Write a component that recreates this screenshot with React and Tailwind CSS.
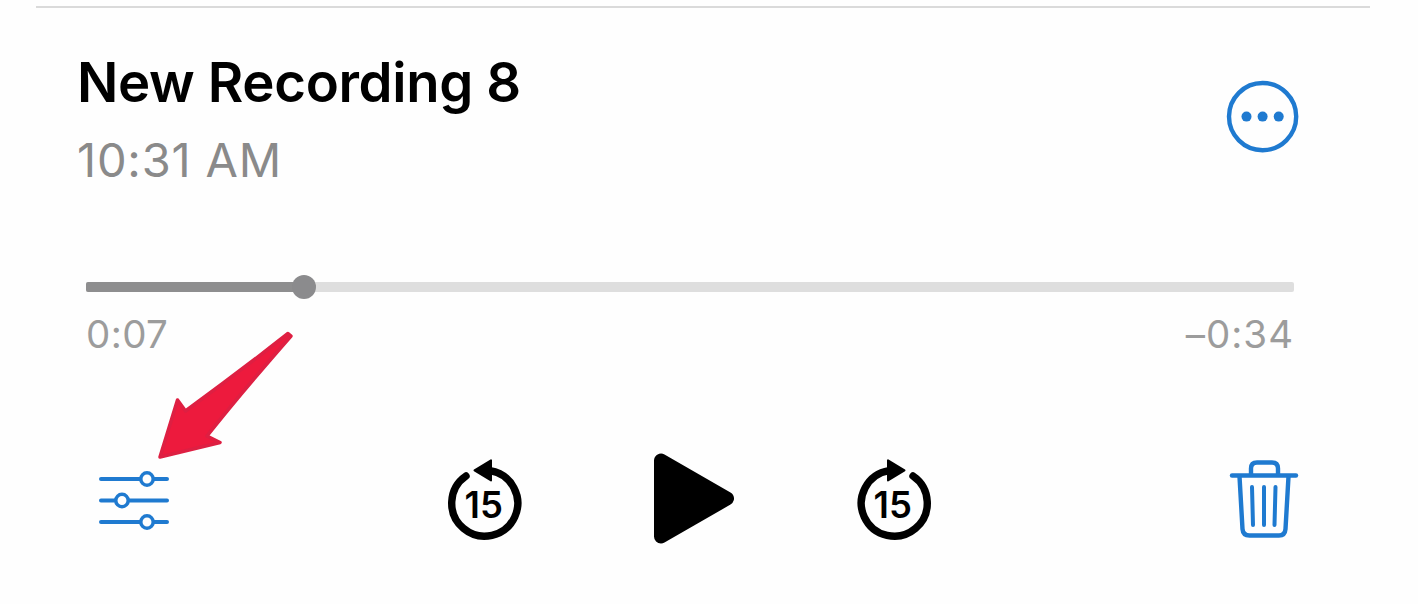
import React from 'react';

function MoreIcon() {
  return (
    <svg width="76" height="76" viewBox="0 0 76 76" fill="none">
      <circle cx="37.6" cy="37.6" r="33.6" stroke="currentColor" strokeWidth="4.4" />
      <circle cx="21.5" cy="37.6" r="5" fill="currentColor" />
      <circle cx="37.6" cy="37.6" r="5" fill="currentColor" />
      <circle cx="53.7" cy="37.6" r="5" fill="currentColor" />
    </svg>
  );
}

function OptionsIcon() {
  return (
    <svg width="72" height="60" viewBox="0 0 72 60" fill="none" stroke="currentColor" strokeWidth="4" strokeLinecap="round">
      <path d="M3 9H42M56 9H69M3 30.5H17M31 30.5H69M3 52H42M56 52H69" />
      <circle cx="49" cy="9" r="6.2" strokeWidth="3.5" />
      <circle cx="24" cy="30.5" r="6.2" strokeWidth="3.5" />
      <circle cx="49" cy="52" r="6.2" strokeWidth="3.5" />
    </svg>
  );
}

function SkipIcon({ forward }) {
  return (
    <svg width="76" height="84" viewBox="0 0 76 84" fill="none">
      <g transform={forward ? 'translate(76 0) scale(-1 1)' : undefined}>
        <path d="M19 18A33 33 0 1 0 43 12.6" stroke="currentColor" strokeWidth="7.4" strokeLinecap="round" />
        <path d="M27.5 12.3L44 2.3V22.5Z" fill="currentColor" stroke="currentColor" strokeWidth="2" strokeLinejoin="round" />
      </g>
      <text x="36.8" y="59.5" textAnchor="middle" fontSize="36.5" fontWeight="600" fill="currentColor">
        15
      </text>
    </svg>
  );
}

function PlayIcon() {
  return (
    <svg width="82" height="94" viewBox="0 0 82 94" fill="currentColor" stroke="currentColor" strokeWidth="14" strokeLinejoin="round">
      <path d="M9 8.5V84.5L75 46.5Z" />
    </svg>
  );
}

function TrashIcon() {
  return (
    <svg width="70" height="82" viewBox="0 0 70 82" fill="none" stroke="currentColor" strokeWidth="4.4" strokeLinecap="round" strokeLinejoin="round">
      <path d="M3 16.5H67" />
      <path d="M22 15.5V9.5Q22 3.5 28 3.5H43Q49 3.5 49 9.5V15.5" />
      <path d="M10.5 17.5L13.5 70Q14 76.5 20.5 76.5H50Q56 76.5 56.5 70L59.5 17.5" />
      <path d="M23 28L24 66M35 28V66M46.5 28L45.5 66" strokeWidth="4" />
    </svg>
  );
}

function PointerArrow() {
  return (
    <svg className="absolute left-[155px] top-[327px]" width="142" height="134" viewBox="0 0 142 134">
      <path
        d="M5 130L22.5 73L30.5 84C62 61 98 34 133 6.5L136 9C108 41 78 76 52 109L65 115.5Z"
        fill="#ed1a3d"
        stroke="#de1f42"
        strokeWidth="3.5"
        strokeLinejoin="round"
      />
    </svg>
  );
}

export default function App() {
  return (
    <div className="relative w-[1418px] h-[604px] overflow-hidden bg-[#fefefe] px-9 pt-1.5 font-['Inter',sans-serif] text-black">
      <div className="h-0.5 w-[1334px] bg-[#dadada]" />

      <div className="flex justify-between pl-[41px] pr-[81px] pt-11">
        <div>
          <h1 className="text-[54.5px] leading-[60px] font-semibold tracking-[-0.35px] whitespace-nowrap">New Recording 8</h1>
          <p className="mt-[18px] text-[47px] leading-[60px] tracking-[0.8px] text-[#8a8a8a] whitespace-nowrap">10:31 AM</p>
        </div>
        <button className="mt-[27px] h-[76px] text-[#1f7ad0]" aria-label="More">
          <MoreIcon />
        </button>
      </div>

      <div className="mt-[92px] ml-[50px] w-[1208px]">
        <div className="relative h-2.5 rounded-[2px] bg-[#dedede]">
          <div className="h-2.5 w-[218px] rounded-l-[2px] bg-[#8e8e8f]" />
          <div className="absolute left-[206px] -top-[7px] size-6 rounded-full bg-[#8b8b8d]" />
        </div>
        <div className="mt-[22px] flex justify-between text-[38.5px] leading-10 text-[#9c9c9c]">
          <span className="tracking-[0.4px]">0:07</span>
          <span className="tracking-[1px]">–0:34</span>
        </div>
      </div>

      <div className="mt-[98px] flex items-start pl-[62px]">
        <button className="mt-[18px] text-[#1f7ad0]" aria-label="Options">
          <OptionsIcon />
        </button>
        <button className="ml-[277px] mt-[6px]" aria-label="Back 15 seconds">
          <SkipIcon />
        </button>
        <button className="ml-[129px]" aria-label="Play">
          <PlayIcon />
        </button>
        <button className="ml-[122px] mt-[6px]" aria-label="Forward 15 seconds">
          <SkipIcon forward />
        </button>
        <button className="ml-[297px] mt-[7px] text-[#1f7ad0]" aria-label="Delete">
          <TrashIcon />
        </button>
      </div>

      <PointerArrow />
    </div>
  );
}
